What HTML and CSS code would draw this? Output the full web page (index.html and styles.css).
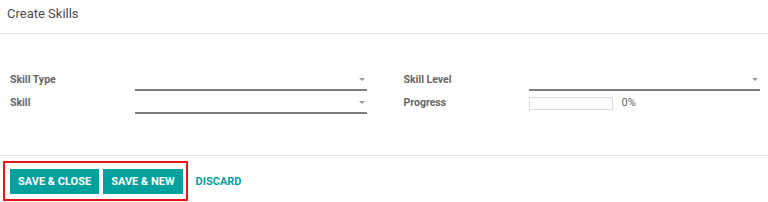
FILE: index.html
```html
<!DOCTYPE html>
<html lang="en">
<head>
    <meta charset="UTF-8">
    <meta name="viewport" content="width=device-width, initial-scale=1.0">
    <title>Create Skills</title>
    <link rel="stylesheet" href="styles.css">
</head>
<body>
    <div class="dialog">
        <div class="dialog-header">Create Skills</div>
        <div class="dialog-body">
            <div class="form-group">
                <div class="form-row">
                    <label class="form-label">Skill Type</label>
                    <div class="field select"><span class="caret"></span></div>
                </div>
                <div class="form-row">
                    <label class="form-label">Skill</label>
                    <div class="field select"><span class="caret"></span></div>
                </div>
            </div>
            <div class="form-group">
                <div class="form-row">
                    <label class="form-label">Skill Level</label>
                    <div class="field select"><span class="caret"></span></div>
                </div>
                <div class="form-row">
                    <label class="form-label">Progress</label>
                    <div class="field progress">
                        <div class="progress-bar"></div>
                        <span class="progress-value">0%</span>
                    </div>
                </div>
            </div>
        </div>
        <div class="dialog-footer">
            <div class="highlight">
                <button class="btn btn-primary">Save &amp; Close</button>
                <button class="btn btn-primary">Save &amp; New</button>
            </div>
            <button class="btn btn-link">Discard</button>
        </div>
    </div>
</body>
</html>
```

FILE: styles.css
```css
body {
    margin: 0;
    font-family: Roboto, 'Noto Sans', sans-serif;
    background: #fff;
    color: #4c4c4c;
}

.dialog-header {
    height: 29px;
    padding: 4px 7px 0;
    font-size: 13px;
    line-height: 20px;
    color: #4c4c4c;
    border-bottom: 1px solid #e2e2e2;
}

.dialog-body {
    display: grid;
    grid-template-columns: 1fr 1fr;
    column-gap: 37px;
    padding: 35px 8px 41px 10px;
}

.form-group {
    display: grid;
    row-gap: 1px;
}

.form-row {
    display: grid;
    grid-template-columns: 125px 1fr;
    height: 22px;
}

.form-label {
    font-size: 10.5px;
    font-weight: bold;
    line-height: 21px;
    color: #666;
}

.field {
    display: flex;
    align-items: center;
    height: 20px;
}

.select {
    justify-content: flex-end;
    border-bottom: 2px solid #7d7d7d;
}

.caret {
    width: 0;
    height: 0;
    margin-right: 2px;
    border-left: 3px solid transparent;
    border-right: 3px solid transparent;
    border-top: 3px solid #999;
}

.progress {
    align-items: flex-start;
}

.progress-bar {
    width: 82px;
    height: 11px;
    margin-top: 5px;
    border: 1px solid #dcdcdc;
}

.progress-value {
    margin-left: 9px;
    font-size: 11px;
    line-height: 22px;
    color: #666;
}

.dialog-footer {
    display: flex;
    align-items: center;
    padding: 5px 3px 0;
    border-top: 1px solid #e2e2e2;
}

.highlight {
    display: flex;
    gap: 4px;
    padding: 6px 3px 5px 5px;
    border: 2px solid #e8141c;
}

.btn {
    border: none;
    font-family: inherit;
    font-size: 11px;
    font-weight: bold;
    text-transform: uppercase;
    height: 25px;
    padding: 0 8px;
    cursor: pointer;
}

.btn-primary {
    background: #00a09d;
    color: #fff;
}

.btn-link {
    background: none;
    color: #00a09d;
}
```
